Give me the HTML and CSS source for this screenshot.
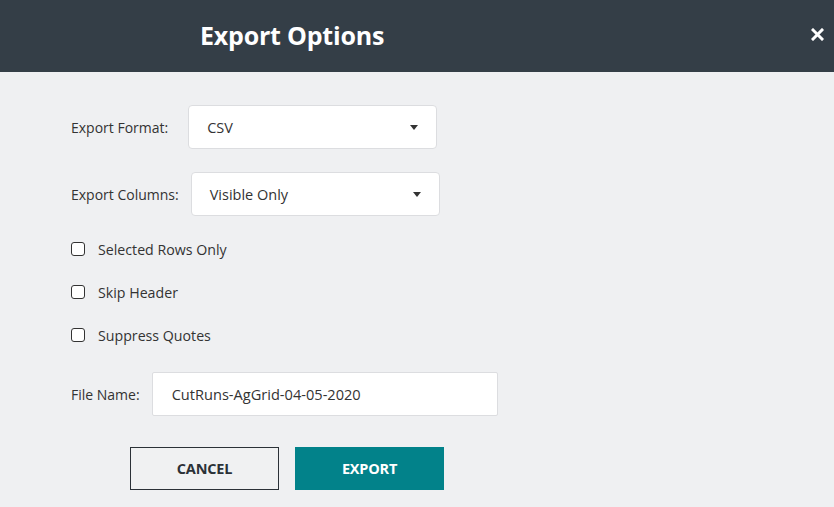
FILE: index.html
```html
<!DOCTYPE html>
<html>
<head>
<meta charset="utf-8">
<link rel="stylesheet" href="styles.css">
</head>
<body>
<div class="dialog">
  <header class="header">
    <h1 class="title">Export Options</h1>
    <span class="close">
      <svg width="13" height="13" viewBox="0 0 13 13"><path d="M2 2 L11 11 M11 2 L2 11" stroke="#fff" stroke-width="3" stroke-linecap="square"/></svg>
    </span>
  </header>
  <main class="body">
    <div class="row row-format">
      <span class="label">Export Format:</span>
      <div class="select select-format">
        <span>CSV</span>
        <span class="caret"></span>
      </div>
    </div>
    <div class="row row-columns">
      <span class="label">Export Columns:</span>
      <div class="select select-columns">
        <span>Visible Only</span>
        <span class="caret"></span>
      </div>
    </div>
    <div class="checks">
      <label class="check"><span class="box"></span><span>Selected Rows Only</span></label>
      <label class="check"><span class="box"></span><span>Skip Header</span></label>
      <label class="check"><span class="box"></span><span>Suppress Quotes</span></label>
    </div>
    <div class="row row-file">
      <span class="label">File Name:</span>
      <div class="input">CutRuns-AgGrid-04-05-2020</div>
    </div>
    <div class="buttons">
      <button class="btn btn-cancel">CANCEL</button>
      <button class="btn btn-export">EXPORT</button>
    </div>
  </main>
</div>
</body>
</html>
```
FILE: styles.css
```css
* { box-sizing: border-box; }
html, body {
  margin: 0;
  padding: 0;
  width: 834px;
  height: 507px;
  overflow: hidden;
  background: #eff0f2;
  font-family: "Open Sans", "Noto Sans", sans-serif;
  color: #333;
}
.dialog {
  width: 834px;
  height: 507px;
  display: flex;
  flex-direction: column;
}
.header {
  height: 72px;
  background: #343e47;
  display: flex;
  align-items: center;
  justify-content: space-between;
  padding: 0 10px 0 200px;
}
.title {
  margin: 0;
  color: #fff;
  font-size: 25px;
  font-weight: 700;
  letter-spacing: -0.2px;
  line-height: 1;
  padding-bottom: 1px;
}
.close {
  display: flex;
  width: 13px;
  height: 13px;
  margin-bottom: 4px;
}
.body {
  flex: 1;
  padding: 33px 0 0 71px;
  display: flex;
  flex-direction: column;
}
.row {
  display: flex;
  align-items: center;
}
.label {
  font-size: 14px;
  color: #333;
  white-space: nowrap;
}
.select {
  height: 44px;
  width: 249px;
  background: #fff;
  border: 1px solid #dcdde0;
  border-radius: 4px;
  display: flex;
  align-items: center;
  justify-content: space-between;
  padding: 0 18px 0 18px;
  font-size: 14.5px;
  color: #333;
}
.select-format { margin-left: 20px; }
.row-columns { margin-top: 23px; }
.select-columns { margin-left: 12px; }
.caret {
  width: 0;
  height: 0;
  border-left: 4.5px solid transparent;
  border-right: 4.5px solid transparent;
  border-top: 5px solid #333;
}
.checks {
  margin-top: 23px;
  display: flex;
  flex-direction: column;
  gap: 23px;
}
.check {
  display: flex;
  align-items: center;
  height: 20px;
  font-size: 14.2px;
  color: #333;
}
.box {
  width: 14px;
  height: 14px;
  border: 1px solid #333;
  border-radius: 3px;
  background: #fff;
  margin-right: 13px;
}
.row-file { margin-top: 27px; }
.input {
  margin-left: 12px;
  width: 346px;
  height: 44px;
  background: #fff;
  border: 1px solid #dcdde0;
  border-radius: 2px;
  display: flex;
  align-items: center;
  padding-left: 19px;
  font-size: 14.6px;
  color: #333;
}
.buttons {
  margin-top: 31px;
  margin-left: 59px;
  display: flex;
  gap: 16px;
}
.btn {
  width: 149px;
  height: 43px;
  font-family: "Open Sans", "Noto Sans", sans-serif;
  font-size: 14.5px;
  font-weight: 700;
  letter-spacing: -0.2px;
  border-radius: 0;
  cursor: pointer;
}
.btn-cancel {
  background: #f0f1f2;
  border: 1px solid #2b3137;
  color: #2b3137;
}
.btn-export {
  background: #02828a;
  border: 1px solid #02828a;
  color: #fff;
}
```
